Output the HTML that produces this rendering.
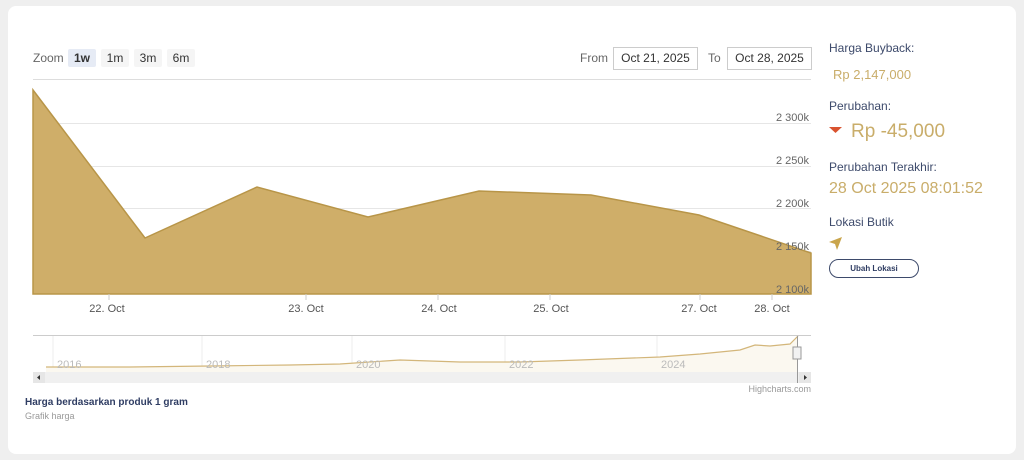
<!DOCTYPE html>
<html><head><style>
body{margin:0;width:1024px;height:460px;background:#efefef;font-family:"Liberation Sans",sans-serif;position:relative;overflow:hidden}
.card{position:absolute;left:8px;top:6px;width:1008px;height:448px;background:#fff;border-radius:8px}
.t{position:absolute;white-space:nowrap}
.btn{position:absolute;top:49px;height:18px;background:#f5f5f5;font-size:12px;color:#333;text-align:center;line-height:18px;border-radius:2px}
.inp{position:absolute;top:47px;height:21px;border:1px solid #ccc;font-size:12px;color:#333;line-height:21px;text-align:center}
.lab{color:#3d4a6b;font-size:12px}
.gold{color:#c9ad6a}
</style></head><body>
<div class="card"></div>
<div class="t" style="left:33px;top:51px;font-size:12px;color:#666">Zoom</div>
<div class="btn" style="left:68px;width:28px;background:#e6ebf5;font-weight:bold">1w</div>
<div class="btn" style="left:101px;width:28px">1m</div>
<div class="btn" style="left:134px;width:28px">3m</div>
<div class="btn" style="left:167px;width:28px">6m</div>
<div class="t" style="left:580px;top:51px;font-size:12px;color:#666">From</div>
<div class="inp" style="left:613px;width:83px">Oct 21, 2025</div>
<div class="t" style="left:708px;top:51px;font-size:12px;color:#666">To</div>
<div class="inp" style="left:727px;width:83px">Oct 28, 2025</div>
<svg style="position:absolute;left:0;top:0" width="820" height="400">
<line x1="33" y1="79.5" x2="811" y2="79.5" stroke="#ddd"/>
<g stroke="#e6e6e6"><line x1="33" y1="123.5" x2="811" y2="123.5"/><line x1="33" y1="166.5" x2="811" y2="166.5"/><line x1="33" y1="208.5" x2="811" y2="208.5"/><line x1="33" y1="251.5" x2="811" y2="251.5"/></g>
<path d="M33 90 L145 238 L257 187 L368 217 L479 191 L591 195 L699 215 L811 253 L811 294 L33 294Z" fill="#cfae69" stroke="#b89548" stroke-width="1.5"/>
<g fill="#666" font-size="11" text-anchor="end" font-family="Liberation Sans"><text x="809" y="121">2 300k</text><text x="809" y="164">2 250k</text><text x="809" y="207">2 200k</text><text x="809" y="250">2 150k</text><text x="809" y="293">2 100k</text></g>
<g stroke="#ccc"><line x1="109" y1="294" x2="109" y2="300"/><line x1="306" y1="294" x2="306" y2="300"/><line x1="438" y1="294" x2="438" y2="300"/><line x1="550" y1="294" x2="550" y2="300"/><line x1="700" y1="294" x2="700" y2="300"/><line x1="772" y1="294" x2="772" y2="300"/></g>
<g fill="#555" font-size="11" text-anchor="middle" font-family="Liberation Sans"><text x="107" y="312">22. Oct</text><text x="306" y="312">23. Oct</text><text x="439" y="312">24. Oct</text><text x="551" y="312">25. Oct</text><text x="699" y="312">27. Oct</text><text x="772" y="312">28. Oct</text></g>
<line x1="33" y1="335.5" x2="811" y2="335.5" stroke="#ccc"/>
<g stroke="#eee"><line x1="53" y1="336" x2="53" y2="372"/><line x1="202" y1="336" x2="202" y2="372"/><line x1="352" y1="336" x2="352" y2="372"/><line x1="505" y1="336" x2="505" y2="372"/><line x1="657" y1="336" x2="657" y2="372"/></g>
<path d="M46 367 L130 367 L210 366 L290 365 L340 364 L400 360 L460 362 L520 362 L580 360 L660 357 L700 354 L740 350 L755 345 L770 346 L790 344 L798 336 L798 372 L46 372Z" fill="#fbf8f0"/>
<path d="M46 367 L130 367 L210 366 L290 365 L340 364 L400 360 L460 362 L520 362 L580 360 L660 357 L700 354 L740 350 L755 345 L770 346 L790 344 L798 336" fill="none" stroke="#d3b67a" stroke-width="1.2"/>
<g fill="#bbb" font-size="11" font-family="Liberation Sans"><text x="57" y="368">2016</text><text x="206" y="368">2018</text><text x="356" y="368">2020</text><text x="509" y="368">2022</text><text x="661" y="368">2024</text></g>
<rect x="33" y="372" width="778" height="11" fill="#f0f0f0"/>
<rect x="33" y="372" width="12" height="11" fill="#e6e6e6"/><rect x="799" y="372" width="12" height="11" fill="#e6e6e6"/>
<path d="M40 375 L37 377.5 L40 380Z M804 375 L807 377.5 L804 380Z" fill="#333"/>
<line x1="797.5" y1="336" x2="797.5" y2="383" stroke="#999"/>
<rect x="793" y="347" width="8" height="12" fill="#f2f2f2" stroke="#999"/>
<text x="811" y="392" fill="#999" font-size="9" text-anchor="end" font-family="Liberation Sans">Highcharts.com</text>
</svg>
<div class="t" style="left:25px;top:397px;font-size:10px;font-weight:bold;color:#2f3d63">Harga berdasarkan produk 1 gram</div>
<div class="t" style="left:25px;top:411px;font-size:9px;color:#999">Grafik harga</div>
<div class="t lab" style="left:829px;top:41px">Harga Buyback:</div>
<div class="t gold" style="left:833px;top:67px;font-size:13px">Rp 2,147,000</div>
<div class="t lab" style="left:829px;top:99px">Perubahan:</div>
<svg style="position:absolute;left:829px;top:127px" width="14" height="8"><path d="M0 0 L13 0 L6.5 6Z" fill="#d9532f"/></svg>
<div class="t gold" style="left:851px;top:121px;font-size:19px">Rp -45,000</div>
<div class="t lab" style="left:829px;top:160px">Perubahan Terakhir:</div>
<div class="t gold" style="left:829px;top:180px;font-size:16px">28 Oct 2025 08:01:52</div>
<div class="t lab" style="left:829px;top:215px">Lokasi Butik</div>
<svg style="position:absolute;left:829px;top:237px" width="14" height="14"><path d="M13 0 L0 5 L6 7 L8 13Z" fill="#c9a54c"/></svg>
<div class="t" style="left:829px;top:259px;width:88px;height:17px;border:1.5px solid #3d4a6b;border-radius:10px;font-size:8px;font-weight:bold;color:#2f3d63;text-align:center;line-height:17px">Ubah Lokasi</div>
</body></html>
